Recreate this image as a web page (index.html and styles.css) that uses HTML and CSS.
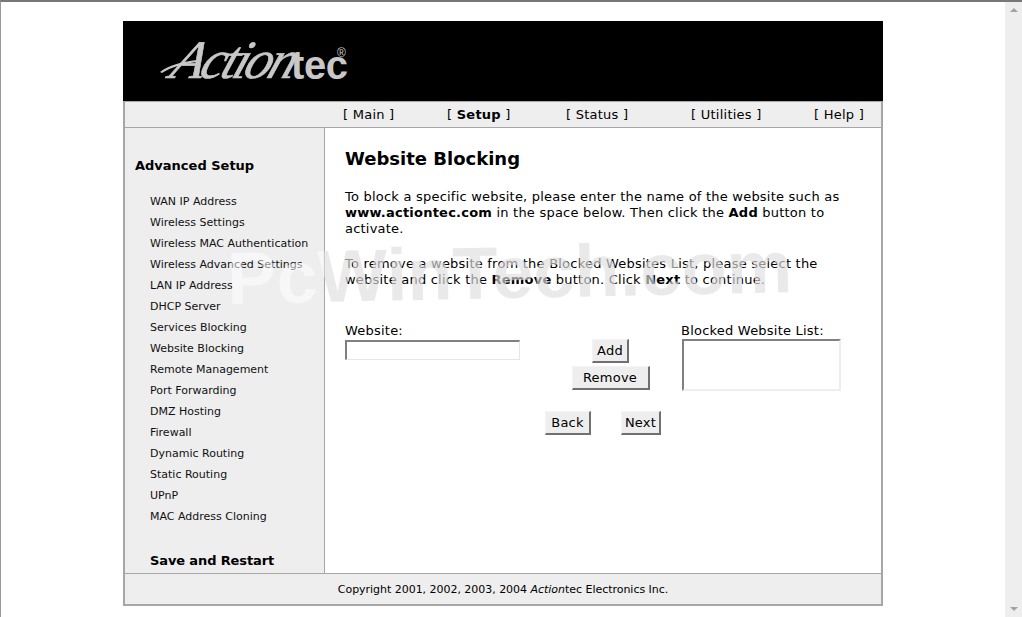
FILE: index.html
```html
<!DOCTYPE html>
<html lang="en">
<head>
<meta charset="utf-8">
<title>Website Blocking</title>
<link rel="stylesheet" href="styles.css">
</head>
<body>
<div class="window">
  <div class="viewport">
    <div class="frame">
      <header class="banner">
        <svg class="logo" width="200" height="50" viewBox="0 0 200 50" aria-label="Actiontec">
          <path class="swash" d="M1 32 C10 25 22 22 38 20 L38 22 C24 24 12 27 3 33 Z"/>
          <text class="logo-script" transform="translate(9,38) skewX(-20)">Action</text>
          <text class="logo-bold" x="132" y="39">tec</text>
          <text class="logo-reg" x="178" y="17">®</text>
        </svg>
      </header>
      <nav class="nav">
        <span>[ Main ]</span>
        <span>[ <b>Setup</b> ]</span>
        <span>[ Status ]</span>
        <span>[ Utilities ]</span>
        <span>[ Help ]</span>
      </nav>
      <div class="middle">
        <aside class="side">
          <h2 class="side-head">Advanced Setup</h2>
          <ul class="side-list">
            <li>WAN IP Address</li>
            <li>Wireless Settings</li>
            <li>Wireless MAC Authentication</li>
            <li>Wireless Advanced Settings</li>
            <li>LAN IP Address</li>
            <li>DHCP Server</li>
            <li>Services Blocking</li>
            <li>Website Blocking</li>
            <li>Remote Management</li>
            <li>Port Forwarding</li>
            <li>DMZ Hosting</li>
            <li>Firewall</li>
            <li>Dynamic Routing</li>
            <li>Static Routing</li>
            <li>UPnP</li>
            <li>MAC Address Cloning</li>
          </ul>
          <div class="side-save">Save and Restart</div>
        </aside>
        <main class="content">
          <h1 class="title">Website Blocking</h1>
          <p class="para">To block a specific website, please enter the name of the website such as <b>www.actiontec.com</b> in the space below. Then click the <b>Add</b> button to activate.</p>
          <p class="para">To remove a website from the Blocked Websites List, please select the website and click the <b>Remove</b> button. Click <b>Next</b> to continue.</p>
          <div class="form-row">
            <div class="field-site">
              <label class="label">Website:</label>
              <div class="input"></div>
            </div>
            <div class="actions">
              <div class="btn btn-add">Add</div>
              <div class="btn btn-remove">Remove</div>
            </div>
            <div class="field-list">
              <label class="label">Blocked Website List:</label>
              <div class="listbox"></div>
            </div>
          </div>
          <div class="pager">
            <div class="btn btn-back">Back</div>
            <div class="btn btn-next">Next</div>
          </div>
        </main>
      </div>
      <footer class="foot">Copyright 2001, 2002, 2003, 2004 <i>Action</i>tec Electronics Inc.</footer>
    </div>
    <div class="watermark">PcWinTech.com</div>
  </div>
  <div class="scrollbar">
    <span class="arrow arrow-up"></span>
    <span class="arrow arrow-down"></span>
  </div>
</div>
</body>
</html>
```
FILE: styles.css
```css
* { box-sizing: border-box; }
html, body { margin: 0; height: 100%; overflow: hidden; background: #fff; }
body { font-family: "DejaVu Sans", Verdana, sans-serif; color: #000; }
.window { display: flex; width: 1022px; height: 617px; border-top: 2px solid #777; border-left: 1px solid #999; }
.viewport { position: relative; flex: 1; padding-top: 19px; }
.frame { width: 760px; height: 585px; margin: 0 auto; display: flex; flex-direction: column; }
.banner { height: 80px; background: #000; flex: none; padding: 19px 0 0 36px; }
.logo { display: block; }
.swash { fill: #c8c8c8; }
.logo-script { font: italic 54px "Liberation Serif", serif; fill: #c8c8c8; stroke: #c8c8c8; stroke-width: .6px; letter-spacing: -3.4px; }
.logo-bold { font: bold 40px "Liberation Sans", sans-serif; fill: #c8c8c8; letter-spacing: -.4px; }
.logo-reg { font: 12px "Liberation Sans", sans-serif; fill: #c8c8c8; }
.nav { flex: none; height: 27px; background: #eee; border: 2px solid #a6a6a6; border-width: 1px 2px; display: grid; grid-template-columns: 104px 119px 125px 123px 1fr; padding-left: 218px; font-size: 13px; line-height: 25px; letter-spacing: .25px; }
.middle { flex: 1; display: flex; min-height: 0; border-left: 2px solid #a6a6a6; border-right: 2px solid #a6a6a6; }
.side { width: 200px; flex: none; background: #eee; border-right: 1px solid #a6a6a6; padding: 30px 0 0 10px; }
.side-head { margin: 0; font-size: 13px; line-height: 16px; font-weight: bold; }
.side-list { list-style: none; margin: 17px 0 0; padding: 0 0 0 15px; font-size: 11px; line-height: 21px; color: #111; }
.side-save { margin: 26px 0 0 15px; font-size: 13px; line-height: 16px; font-weight: bold; letter-spacing: -.12px; }
.content { flex: 1; padding: 19px 36px 0 20px; font-size: 13px; line-height: 16px; min-width: 0; letter-spacing: .22px; }
.title { margin: 0; font-size: 18px; line-height: 24px; font-weight: bold; letter-spacing: 0; }
.para { margin: 18px 0 0; }
.para + .para { margin-top: 19px; }
.form-row { display: flex; margin-top: 35px; }
.label { display: block; line-height: 16px; }
.input { width: 175px; height: 20px; margin-top: 1px; background: #fff; border: 2px solid; border-color: #808080 #e6e6e6 #e6e6e6 #808080; border-width: 2px 1px 1px 2px; }
.actions { width: 161px; display: flex; flex-direction: column; align-items: center; padding: 16px 0 0 20px; }
.btn { display: flex; align-items: center; justify-content: center; height: 24px; background: #eee; border: 2px solid; border-color: #f4f4f4 #707070 #707070 #f4f4f4; border-width: 1px 2px 2px 1px; }
.btn-add { width: 37px; }
.btn-remove { width: 78px; margin-top: 3px; }
.btn-back { width: 46px; }
.btn-next { width: 40px; }
.listbox { width: 159px; height: 52px; margin-left: 1px; border: 2px solid; border-color: #808080 #eee #eee #808080; background: #fff; }
.pager { display: flex; gap: 30px; margin: 20px 0 0 200px; }
.foot { flex: none; height: 33px; background: #eee; border: 2px solid #a6a6a6; border-top-width: 1px; font-size: 11px; line-height: 31px; text-align: center; letter-spacing: -.03px; }
.watermark { position: absolute; left: 226px; top: 236px; font: bold 74px "Liberation Sans", sans-serif; line-height: 70px; color: transparent; background: linear-gradient(to right, rgba(255, 255, 255, .5) 97px, rgba(222, 222, 222, .65) 97px); -webkit-background-clip: text; background-clip: text; transform: rotate(-1.2deg); pointer-events: none; white-space: nowrap; }
.scrollbar { position: relative; width: 17px; flex: none; background: #eee; }
.arrow { position: absolute; left: 5px; width: 0; height: 0; border-left: 4px solid transparent; border-right: 4px solid transparent; }
.arrow-up { top: 6px; border-bottom: 4px solid #a3a3a3; }
.arrow-down { top: 605px; border-top: 4px solid #a3a3a3; }
```
